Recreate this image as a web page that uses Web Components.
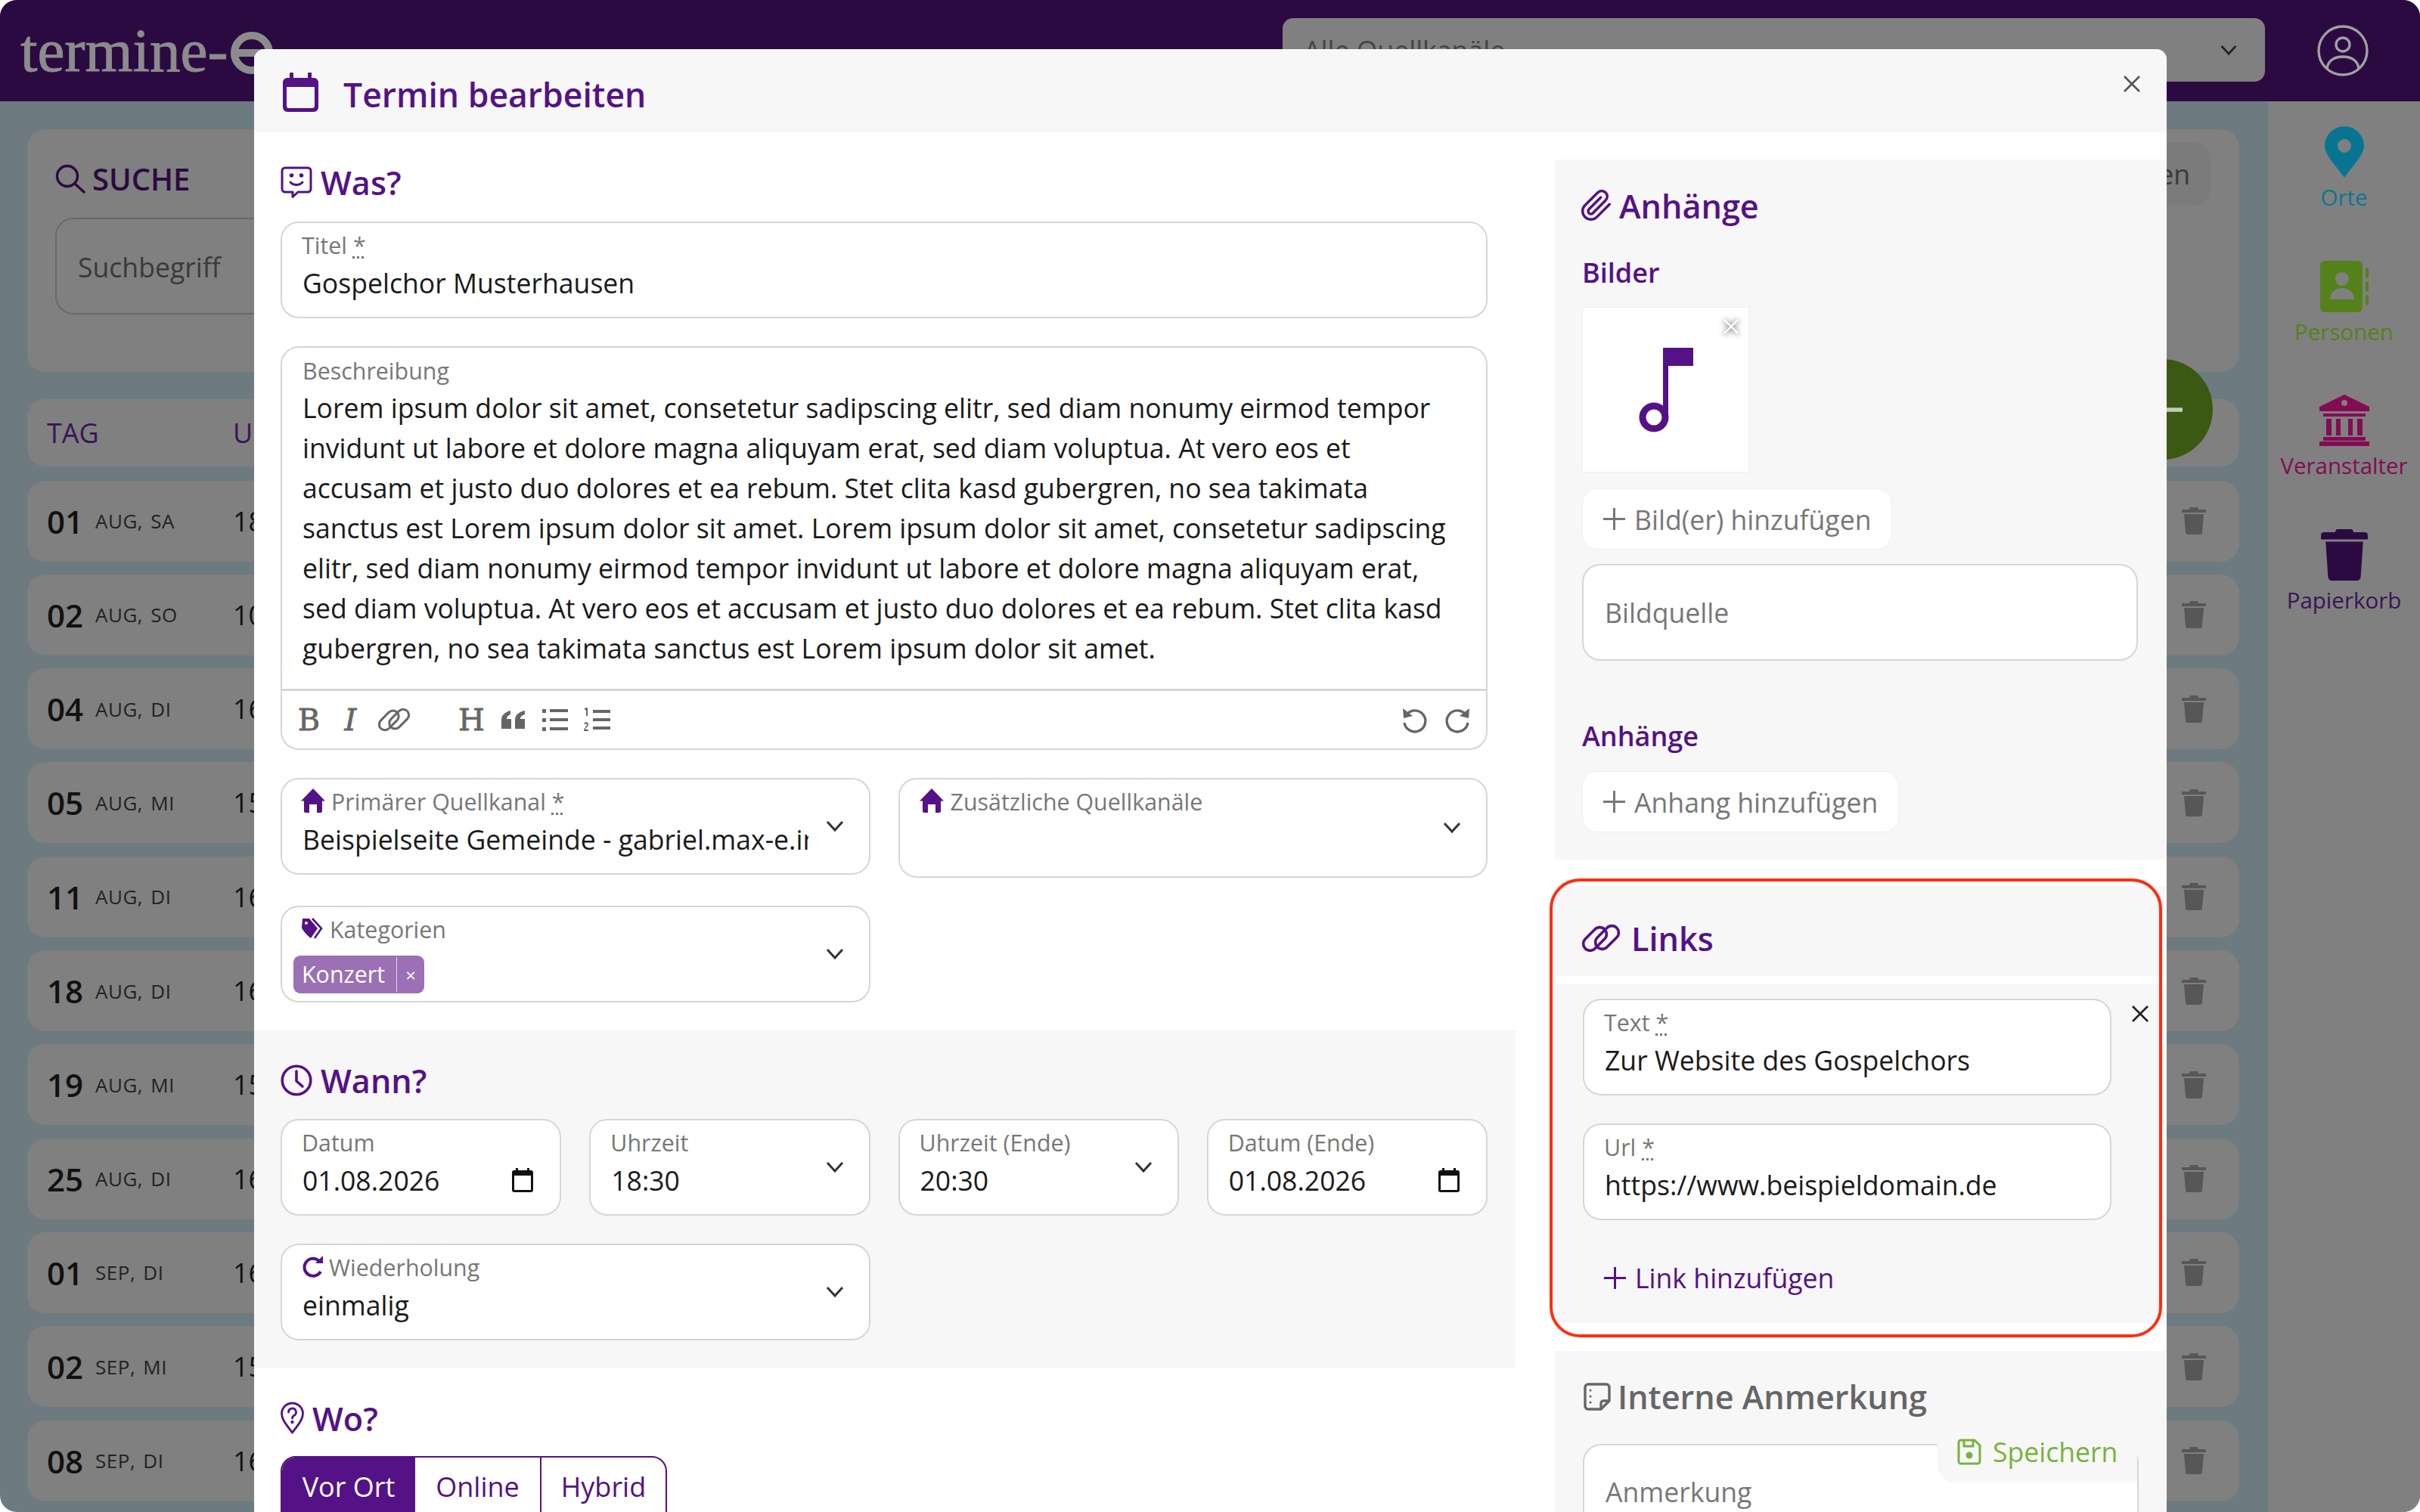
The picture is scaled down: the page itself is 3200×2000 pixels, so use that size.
<!doctype html>
<html lang="de">
<head>
<meta charset="utf-8">
<title>Termin bearbeiten</title>
<style>
  html, body { margin: 0; background: #fff; }
  body { font-family: "Open Sans", "Noto Sans", sans-serif; }
</style>
</head>
<body>
<te-app>
  <te-header slot="header"></te-header>

  <te-search slot="main"></te-search>
  <te-row slot="main" head day="TAG" time="UHR"></te-row>
  <te-row slot="main" day="01" month="AUG, SA" time="18:30"></te-row>
  <te-row slot="main" day="02" month="AUG, SO" time="10:00"></te-row>
  <te-row slot="main" day="04" month="AUG, DI" time="16:00"></te-row>
  <te-row slot="main" day="05" month="AUG, MI" time="15:00"></te-row>
  <te-row slot="main" day="11" month="AUG, DI" time="16:00"></te-row>
  <te-row slot="main" day="18" month="AUG, DI" time="16:00"></te-row>
  <te-row slot="main" day="19" month="AUG, MI" time="15:00"></te-row>
  <te-row slot="main" day="25" month="AUG, DI" time="16:00"></te-row>
  <te-row slot="main" day="01" month="SEP, DI" time="16:00"></te-row>
  <te-row slot="main" day="02" month="SEP, MI" time="15:00"></te-row>
  <te-row slot="main" day="08" month="SEP, DI" time="16:00"></te-row>

  <te-side-item slot="side" icon="pin" color="#087590" text="#0c7690" label="Orte"></te-side-item>
  <te-side-item slot="side" icon="contacts" color="#55811b" text="#55811b" label="Personen"></te-side-item>
  <te-side-item slot="side" icon="bank" color="#830c53" text="#830c53" label="Veranstalter"></te-side-item>
  <te-side-item slot="side" icon="bin" color="#2b0a42" text="#3a1458" label="Papierkorb"></te-side-item>

  <te-fab slot="fab"></te-fab>

  <te-modal slot="modal" heading="Termin bearbeiten">
    <te-section slot="left" heading="Was?" icon="bubble">
      <te-form-grid>
        <te-field span="4" required>
          <span slot="label">Titel</span>Gospelchor Musterhausen
        </te-field>
        <te-editor span="4"></te-editor>
        <te-field span="2" chevron required>
          <te-icon slot="icon" name="home" style="width:32px;height:32px"></te-icon>
          <span slot="label">Primärer Quellkanal</span>Beispielseite Gemeinde - gabriel.max-e.info
        </te-field>
        <te-field span="2" chevron tall>
          <te-icon slot="icon" name="home" style="width:34px;height:32px"></te-icon>
          <span slot="label">Zusätzliche Quellkanäle</span>
        </te-field>
        <te-field span="2" chevron chips>
          <te-icon slot="icon" name="tags" style="width:30px;height:30px"></te-icon>
          <span slot="label">Kategorien</span><te-chip>Konzert</te-chip>
        </te-field>
      </te-form-grid>
    </te-section>

    <te-section slot="left" heading="Wann?" icon="clock" shaded>
      <te-form-grid>
        <te-field>
          <span slot="label">Datum</span>01.08.2026
          <te-icon slot="trail" name="date" style="width:28px;height:32px;color:#111"></te-icon>
        </te-field>
        <te-field chevron><span slot="label">Uhrzeit</span>18:30</te-field>
        <te-field chevron><span slot="label">Uhrzeit (Ende)</span>20:30</te-field>
        <te-field>
          <span slot="label">Datum (Ende)</span>01.08.2026
          <te-icon slot="trail" name="date" style="width:28px;height:32px;color:#111"></te-icon>
        </te-field>
        <te-field span="2" chevron>
          <te-icon slot="icon" name="repeat" style="width:29px;height:30px"></te-icon>
          <span slot="label">Wiederholung</span>einmalig
        </te-field>
      </te-form-grid>
    </te-section>

    <te-section slot="left" heading="Wo?" icon="pinq">
      <te-segments></te-segments>
    </te-section>

    <te-attachments slot="right"></te-attachments>
    <te-links slot="right"></te-links>
    <te-note slot="right"></te-note>

    <te-save slot="float"></te-save>
  </te-modal>
</te-app>

<script>
const PURPLE = "#541286";

const ICONS = {
  calendar: `<svg viewBox="0 0 47 52"><path fill="currentColor" d="M9 0h5v7h19V0h5v7h3a6 6 0 0 1 6 6v33a6 6 0 0 1-6 6H6a6 6 0 0 1-6-6V13a6 6 0 0 1 6-6h3zM5 19v25a3 3 0 0 0 3 3h31a3 3 0 0 0 3-3V19z"/></svg>`,
  date: `<svg viewBox="0 0 28 32"><path fill="currentColor" d="M5 0h3v3h12V0h3v3h2a3 3 0 0 1 3 3v23a3 3 0 0 1-3 3H3a3 3 0 0 1-3-3V6a3 3 0 0 1 3-3h2zM3 10v19h22V10z"/></svg>`,
  bubble: `<svg viewBox="0 0 42 42" fill="none" stroke="currentColor" stroke-width="3" stroke-linejoin="round" stroke-linecap="round"><path d="M6 2h30a4 4 0 0 1 4 4v24a4 4 0 0 1-4 4H23l-7 6.500V34H6a4 4 0 0 1-4-4V6a4 4 0 0 1 4-4z"/><path d="M13 21c4 4.500 12 4.500 16 0"/><circle cx="14.500" cy="12" r="1.300" fill="currentColor"/><circle cx="27.500" cy="12" r="1.300" fill="currentColor"/></svg>`,
  clock: `<svg viewBox="0 0 42 42" fill="none" stroke="currentColor" stroke-width="3.600" stroke-linecap="round" stroke-linejoin="round"><circle cx="21" cy="21" r="18.800"/><path d="M21 9v13l8 7"/></svg>`,
  pinq: `<svg viewBox="0 0 31 42" fill="none" stroke="currentColor" stroke-width="2.800" stroke-linecap="round" stroke-linejoin="round"><path d="M15.500 40C9 31 1.500 23.500 1.500 15a14 14 0 0 1 28 0c0 8.500-7.500 16-14 25z"/><path d="M10.500 13a5 5 0 1 1 7.500 4.300c-1.700 1-2.500 2-2.500 3.700"/><circle cx="15.500" cy="26" r=".8" fill="currentColor"/></svg>`,
  clip: `<svg viewBox="0 0 24 24" fill="none" stroke="currentColor" stroke-width="1.900" stroke-linecap="round" stroke-linejoin="round"><path d="M21.440 11.050l-9.190 9.190a6 6 0 0 1-8.490-8.490l9.190-9.190a4 4 0 0 1 5.660 5.660l-9.200 9.190a2 2 0 0 1-2.830-2.830l8.490-8.480"/></svg>`,
  link: `<svg viewBox="0 0 50 38" fill="none" stroke="currentColor" stroke-width="3.600"><rect x="-1" y="11" width="36" height="18" rx="9" transform="rotate(-45 17 20)"/><rect x="15" y="9" width="36" height="18" rx="9" transform="rotate(-45 33 18)"/></svg>`,
  note: `<svg viewBox="0 0 37 37" fill="none" stroke="currentColor" stroke-width="3.400" stroke-linejoin="round"><path d="M7 2h24a4 4 0 0 1 4 4v18L24 35H7a4 4 0 0 1-4-4V6a4 4 0 0 1 4-4z"/><path d="M35 24H27a3 3 0 0 0-3 3v8"/><path d="M10 10h.1M10 18h.1M10 26h.1" stroke-linecap="round" stroke-width="3"/></svg>`,
  save: `<svg viewBox="0 0 32 35" fill="none" stroke="currentColor" stroke-width="3" stroke-linejoin="round"><path d="M5 2h18l7 7v21a3 3 0 0 1-3 3H5a3 3 0 0 1-3-3V5a3 3 0 0 1 3-3z"/><path d="M9 2v8h12V2"/><circle cx="16" cy="22" r="3" fill="currentColor"/></svg>`,
  home: `<svg viewBox="0 0 32 32"><path fill="currentColor" d="M16 0l16 16.500h-4V30a2 2 0 0 1-2 2h-5V21h-10v11H6a2 2 0 0 1-2-2V16.500H0z"/></svg>`,
  tags: `<svg viewBox="0 0 30 30"><path fill="currentColor" d="M2 2h9l11 13-9 13C10 26 2 18 1 14z"/><path fill="none" stroke="currentColor" stroke-width="2.600" d="M15 2l12 13-9 13"/><circle cx="7" cy="8" r="2" fill="#fff"/></svg>`,
  repeat: `<svg viewBox="0 0 29 30" fill="none" stroke="currentColor" stroke-width="4"><path d="M24 8a11.500 11.500 0 1 0 2 14"/><path fill="currentColor" stroke="none" d="M19 11h10V1z"/></svg>`,
  search: `<svg viewBox="0 0 40 38" fill="none" stroke="currentColor" stroke-width="3.400" stroke-linecap="round"><circle cx="16" cy="15" r="13.500"/><path d="M26 25l12 11"/></svg>`,
  chevron: `<svg viewBox="0 0 24 16" fill="none" stroke="currentColor" stroke-width="3"><path d="M2 2l10 11L22 2"/></svg>`,
  user: `<svg viewBox="0 0 68 68" fill="none" stroke="currentColor" stroke-width="3.400"><circle cx="34" cy="34" r="32"/><circle cx="34" cy="26" r="9"/><path d="M13 58c1-11 10-16 21-16s20 5 21 16"/></svg>`,
  trash: `<svg viewBox="0 0 32 36"><path fill="currentColor" d="M11 0h10l1 3h9a1 1 0 0 1 1 1v3H0V4a1 1 0 0 1 1-1h9zM3 9h26l-2 24a3 3 0 0 1-3 3H8a3 3 0 0 1-3-3z"/></svg>`,
  pin: `<svg viewBox="0 0 52 68"><path fill="currentColor" fill-rule="evenodd" d="M26 68C15 52 0 38 0 26a26 26 0 0 1 52 0c0 12-15 26-26 42zm0-33a9 9 0 1 0 0-18 9 9 0 0 0 0 18z"/></svg>`,
  contacts: `<svg viewBox="0 0 64 68"><path fill="currentColor" fill-rule="evenodd" d="M6 0h44a6 6 0 0 1 6 6v56a6 6 0 0 1-6 6H6a6 6 0 0 1-6-6V6a6 6 0 0 1 6-6zm23 15a9 9 0 1 0 0 18 9 9 0 0 0 0-18zM13 51h32c0-9-7-15-16-15s-16 6-16 15z"/><rect x="60" y="9" width="4" height="14" rx="2" fill="currentColor"/><rect x="60" y="27" width="4" height="14" rx="2" fill="currentColor"/><rect x="60" y="45" width="4" height="14" rx="2" fill="currentColor"/></svg>`,
  bank: `<svg viewBox="0 0 68 68"><path fill="currentColor" fill-rule="evenodd" d="M34 0l33 16v6H1v-6zm0 7a4 4 0 1 0 0 8 4 4 0 0 0 0-8z"/><path fill="currentColor" d="M6 25h56v4H6zM10 32h7v22h-7zM23 32h6v22h-6zM39 32h6v22h-6zM51 32h7v22h-7zM6 56h56v5H6zM1 62h66v6H1z"/></svg>`,
  bin: `<svg viewBox="0 0 60 66"><path fill="currentColor" d="M20 0h20l2 4h14a4 4 0 0 1 4 4v5H0V8a4 4 0 0 1 4-4h14zM6 16h48l-3 45a5 5 0 0 1-5 5H14a5 5 0 0 1-5-5z"/></svg>`,
  note4: `<svg viewBox="0 0 70 112"><path fill="currentColor" d="M30 0h40v24H37v68h-7z"/><circle cx="18" cy="92" r="15" fill="none" stroke="currentColor" stroke-width="9"/></svg>`,
  plus: `<svg viewBox="0 0 29 29" fill="none" stroke="currentColor" stroke-width="3"><path d="M14.500 0v29M0 14.500h29"/></svg>`,
  close: `<svg viewBox="0 0 24 24" fill="none" stroke="currentColor" stroke-width="2.600"><path d="M2 2l20 20M22 2L2 22"/></svg>`,
  quote: `<svg viewBox="0 0 32 24"><path fill="currentColor" d="M0 24V13C0 6 4 2 12 0v5c-3 1-5 3-5 6h6v13zM18 24V13c0-7 4-11 13-13v5c-4 1-6 3-6 6h6v13z"/></svg>`,
  ul: `<svg viewBox="0 0 34 30"><path fill="currentColor" d="M0 1h5v5H0zM10 1h24v4H10zM0 13h5v5H0zM10 13h24v4H10zM0 25h5v5H0zM10 25h24v4H10z"/></svg>`,
  ol: `<svg viewBox="0 0 36 32"><path fill="currentColor" d="M13 3h23v4H13zM13 14h23v4H13zM13 25h23v4H13zM2 1l3-1h1v11H4V3L2 3zM1 21c1-2 6-3 6 1 0 3-4 5-4 7h4v2H1c0-4 4-6 4-9 0-1-2-1-3 0z"/></svg>`,
  undo: `<svg viewBox="0 0 34 32" fill="none" stroke="currentColor" stroke-width="3.400"><path d="M7 9a14 14 0 1 1-3 11"/><path fill="currentColor" stroke="none" d="M2 1l1 13 12-3z"/></svg>`,
  redo: `<svg viewBox="0 0 34 32" fill="none" stroke="currentColor" stroke-width="3.400"><path d="M27 9a14 14 0 1 0 3 11"/><path fill="currentColor" stroke="none" d="M32 1l-1 13-12-3z"/></svg>`,
};

class ShadowElement extends HTMLElement {
  constructor() {
    super();
    this.attachShadow({ mode: "open" });
  }

  connectedCallback() {
    this.shadowRoot.innerHTML = `<style>${this.styles()}</style>${this.markup()}`;
  }

  attr(name, fallback = "") {
    return this.hasAttribute(name) ? this.getAttribute(name) : fallback;
  }
}

class TeIcon extends ShadowElement {
  styles() {
    return `:host { display: inline-block; flex: none; line-height: 0; }
      svg { width: 100%; height: 100%; display: block; overflow: visible; }`;
  }
  markup() {
    return ICONS[this.attr("name")] || "";
  }
}

class TeApp extends ShadowElement {
  styles() {
    return `:host { display: block; position: relative; width: 3200px; height: 2000px; overflow: hidden;
        border-radius: 22px; background: #6d7a80; }
      .body { display: flex; height: 1866px; }
      main { flex: 1; min-width: 0; padding: 37px 38px 0 36px; display: flex; flex-direction: column; gap: 17.300px; }
      aside { width: 201px; background: #808080; padding-top: 33px; box-sizing: border-box; }
      ::slotted(te-fab) { position: absolute; left: 2793px; top: 475px; }
      ::slotted(te-modal) { position: absolute; left: 336px; top: 65px; }`;
  }
  markup() {
    return `<slot name="header"></slot>
      <div class="body">
        <main><slot name="main"></slot></main>
        <aside><slot name="side"></slot></aside>
      </div>
      <slot name="fab"></slot>
      <slot name="modal"></slot>`;
  }
}

class TeHeader extends ShadowElement {
  styles() {
    return `:host { display: flex; align-items: center; height: 134px; background: #2b0a42; padding: 0 68px 0 27px; box-sizing: border-box; }
      .logo { display: flex; align-items: center; gap: 4px; font: 81px "Liberation Serif", serif; color: #8c8c8c; -webkit-text-stroke: 1px #8c8c8c; }
      .logo svg { width: 56px; height: 56px; margin-top: 6px; }
      .select { margin-left: auto; width: 1299px; height: 84px; margin-top: -2px; border-radius: 14px; background: #808080; box-sizing: border-box;
        padding: 0 36px 0 28px; display: flex; align-items: center; justify-content: space-between; font-size: 35.600px; color: #444; }
      .select te-icon { width: 24px; height: 15px; color: #222; }
      .user { width: 68px; height: 68px; margin-left: 69px; color: #a0a0a0; }`;
  }
  markup() {
    return `<div class="logo">termine-<svg viewBox="0 0 56 56" fill="none" stroke="#8c8c8c" stroke-width="10"><circle cx="28" cy="28" r="23"/><path d="M10 28h36"/></svg></div>
      <div class="select">Alle Quellkanäle<te-icon name="chevron"></te-icon></div>
      <te-icon class="user" name="user"></te-icon>`;
  }
}

class TeSearch extends ShadowElement {
  styles() {
    return `:host { display: flex; justify-content: space-between; align-items: flex-start; height: 321px; box-sizing: border-box; flex: none;
        background: #808080; border-radius: 24px; padding: 18px 38px 0 37px; }
      h2 { margin: 20px 0 23px; display: flex; align-items: center; gap: 9px; font-size: 40px; line-height: 56px; font-weight: 600; color: #2b0a42; }
      h2 te-icon { width: 40px; height: 38px; color: #2b0a42; }
      .input { width: 600px; height: 128px; box-sizing: border-box; border: 2px solid #6a6a6a; border-radius: 24px; padding: 2px 0 0 28px;
        display: flex; align-items: center; font-size: 35.600px; color: #3a3a3a; }
      .reset { height: 82px; padding: 0 27px; border-radius: 20px; background: #7b7b7b; display: flex; align-items: center; font-size: 35.600px; color: #383838; }`;
  }
  markup() {
    return `<div><h2><te-icon name="search"></te-icon>SUCHE</h2><div class="input">Suchbegriff</div></div>
      <div class="reset">zurücksetzen</div>`;
  }
}

class TeRow extends ShadowElement {
  styles() {
    return `:host { display: flex; align-items: center; height: 107px; box-sizing: border-box; flex: none;
        background: #808080; border-radius: 24px; padding: 0 44px 0 26px; color: #111; }
      :host([head]) { height: 89px; color: #3a1458; margin: 19px 0 1px; }
      .day { width: 246px; display: flex; align-items: center; gap: 16px; }
      .num { font-size: 42px; font-weight: 600; }
      .month { font-size: 26px; letter-spacing: .5px; color: #222; word-spacing: 3px; }
      .time, .label { font-size: 36px; }
      te-icon { margin-left: auto; width: 32px; height: 36px; color: #575757; }`;
  }
  markup() {
    if (this.hasAttribute("head")) {
      return `<div class="day label">${this.attr("day")}</div><div class="label">${this.attr("time")}</div>`;
    }
    return `<div class="day"><span class="num">${this.attr("day")}</span><span class="month">${this.attr("month")}</span></div>
      <div class="time">${this.attr("time")}</div>
      <te-icon name="trash"></te-icon>`;
  }
}

class TeSideItem extends ShadowElement {
  styles() {
    return `:host { display: flex; flex-direction: column; align-items: center; height: 177.700px; }
      te-icon { height: 68px; width: 68px; }
      span { margin-top: 6px; font-size: 29.500px; line-height: 40px; }`;
  }
  markup() {
    return `<te-icon name="${this.attr("icon")}" style="color:${this.attr("color")}"></te-icon>
      <span style="color:${this.attr("text")}">${this.attr("label")}</span>`;
  }
}

class TeFab extends ShadowElement {
  styles() {
    return `:host { display: flex; align-items: center; justify-content: center; width: 133px; height: 133px; border-radius: 50%; background: #3b5912; color: #c4cbb8; }
      te-icon { width: 52px; height: 52px; }`;
  }
  markup() {
    return `<te-icon name="plus"></te-icon>`;
  }
}

class TeModal extends ShadowElement {
  styles() {
    return `:host { display: flex; flex-direction: column; position: absolute; width: 2529px; height: 1935px; overflow: hidden;
        background: #fff; border-radius: 14px 14px 0 0; }
      header { height: 110px; flex: none; background: #f7f7f7; display: flex; align-items: center; padding: 8px 34px 0 38px; box-sizing: border-box;
        font-size: 44.500px; font-weight: 600; color: ${PURPLE}; }
      header .cal { width: 47px; height: 52px; margin: -4px 33px 0 0; }
      header .x { margin: -26px 0 0 auto; width: 24px; height: 24px; color: #555; }
      .cols { display: grid; grid-template-columns: 1668px 809px; column-gap: 52px; }
      ::slotted(te-save) { position: absolute; right: 39px; bottom: 39px; }`;
  }
  markup() {
    return `<header><te-icon class="cal" name="calendar"></te-icon>${this.attr("heading")}<te-icon class="x" name="close"></te-icon></header>
      <div class="cols">
        <div><slot name="left"></slot></div>
        <div style="padding-top:36px"><slot name="right"></slot></div>
      </div>
      <slot name="float"></slot>`;
  }
}

class TeHeading extends ShadowElement {
  styles() {
    return `:host { display: flex; align-items: center; height: 60px; gap: 11px; font-size: 43.200px; font-weight: 600; color: var(--heading-color, ${PURPLE}); }
      te-icon { height: 42px; width: 42px; }
      te-icon[name=pinq] { width: 31px; }
      te-icon[name=clip] { width: 44px; height: 44px; margin-left: -3px; margin-right: -3px; }
      te-icon[name=link] { width: 50px; height: 38px; margin-right: 4px; }
      te-icon[name=note] { width: 37px; height: 37px; margin-right: -2px; }`;
  }
  markup() {
    return `<te-icon name="${this.attr("icon")}"></te-icon>${this.attr("text")}`;
  }
}

class TeSection extends ShadowElement {
  styles() {
    return `:host { display: block; padding: 36px 37px 37px 35px; }
      :host([shaded]) { background: #f7f7f7; padding-bottom: 36px; }
      :host([icon=pinq]) { padding-top: 37px; }
      te-heading { margin-bottom: 22px; }
      :host([shaded]) te-heading { margin-bottom: 21px; }`;
  }
  markup() {
    return `<te-heading icon="${this.attr("icon")}" text="${this.attr("heading")}"></te-heading><slot></slot>`;
  }
}

class TeFormGrid extends ShadowElement {
  styles() {
    return `:host { display: grid; grid-template-columns: repeat(4, 1fr); gap: 37px; align-items: start; }
      ::slotted([span="2"]) { grid-column: span 2; }
      ::slotted([span="4"]) { grid-column: span 4; }`;
  }
  markup() {
    return `<slot></slot>`;
  }
}

class TeField extends ShadowElement {
  styles() {
    return `:host { display: flex; align-items: center; height: 128px; box-sizing: border-box; min-width: 0;
        background: #fff; border: 2px solid #d6d6d6; border-radius: 24px; padding: 0 33px 0 27px; }
      :host([tall]) { height: 132px; }
      .col { flex: 1; min-width: 0; align-self: flex-start; padding-top: 9px; }
      .label { display: flex; align-items: center; gap: 9px; height: 40px; font-size: 30.400px; color: #777; white-space: nowrap; }
      .label ::slotted(te-icon) { color: ${PURPLE}; margin: -2px 0 0 -2px; }
      u { text-decoration: underline dotted; text-underline-offset: 3px; }
      .value { display: flex; align-items: center; justify-content: space-between; margin-top: 5px; height: 50px; font-size: 35.600px; color: #1a1a1a;
        white-space: nowrap; overflow: hidden; }
      :host([chips]) .value { overflow: visible; align-items: flex-start; margin-top: 6px; }
      .label span { margin-left: -1px; }
      .chev { width: 24px; height: 16px; margin-left: 23px; color: #333; }
      slot[name=trail]::slotted(te-icon) { margin-right: 2px; }`;
  }
  markup() {
    const req = this.hasAttribute("required") ? ` <u>*</u>` : "";
    const chev = this.hasAttribute("chevron") ? `<te-icon class="chev" name="chevron"></te-icon>` : "";
    return `<div class="col">
        <div class="label"><slot name="icon"></slot><span><slot name="label"></slot>${req}</span></div>
        <div class="value"><span><slot></slot></span><slot name="trail"></slot></div>
      </div>${chev}`;
  }
}

class TeChip extends ShadowElement {
  styles() {
    return `:host { display: inline-flex; align-items: center; height: 50px; margin: 9px 0 0 -12px; background: #9b70b5; border-radius: 9px;
        color: #fff; font-size: 30.400px; }
      .t { padding: 0 15px 0 11px; line-height: 46px; border-right: 1px solid #e3d6ec; height: 46px; }
      .x { width: 36px; text-align: center; font-size: 24px; }`;
  }
  markup() {
    return `<span class="t"><slot></slot></span><span class="x">×</span>`;
  }
}

const LOREM = [
  "Lorem ipsum dolor sit amet, consetetur sadipscing elitr, sed diam nonumy eirmod tempor",
  "invidunt ut labore et dolore magna aliquyam erat, sed diam voluptua. At vero eos et",
  "accusam et justo duo dolores et ea rebum. Stet clita kasd gubergren, no sea takimata",
  "sanctus est Lorem ipsum dolor sit amet. Lorem ipsum dolor sit amet, consetetur sadipscing",
  "elitr, sed diam nonumy eirmod tempor invidunt ut labore et dolore magna aliquyam erat,",
  "sed diam voluptua. At vero eos et accusam et justo duo dolores et ea rebum. Stet clita kasd",
  "gubergren, no sea takimata sanctus est Lorem ipsum dolor sit amet.",
];

class TeEditor extends ShadowElement {
  styles() {
    return `:host { display: block; height: 534px; box-sizing: border-box; border: 2px solid #d6d6d6; border-radius: 24px; background: #fff; }
      .top { height: 454px; box-sizing: border-box; border-bottom: 3px solid #d6d6d6; padding: 11px 27px 0; }
      .label { height: 40px; line-height: 40px; font-size: 30.400px; color: #777; margin-bottom: 2px; }
      .text { font-size: 35.600px; line-height: 53px; color: #1a1a1a; white-space: nowrap; }
      .bar { display: flex; align-items: center; height: 76px; padding: 0 8px; color: #666; }
      .bar > span { width: 55px; display: flex; justify-content: center; align-items: center; }
      .glyph { font: 400 40px "DejaVu Serif", serif; line-height: 1; -webkit-text-stroke: .8px #666; }
      .glyph.i { font-style: italic; }
      .gap { width: 50px !important; }
      .end { margin-left: auto; }
      te-icon[name=link] { width: 42px; height: 32px; margin-left: 4px; }
      te-icon[name=quote] { width: 32px; height: 24px; }
      te-icon[name=ul] { width: 34px; height: 30px; }
      te-icon[name=ol] { width: 36px; height: 32px; }
      te-icon[name=undo], te-icon[name=redo] { width: 34px; height: 32px; }
      .w { width: 58px !important; }`;
  }
  markup() {
    return `<div class="top"><div class="label">Beschreibung</div><div class="text">${LOREM.join("<br>")}</div></div>
      <div class="bar">
        <span class="glyph">B</span><span class="glyph i">I</span><span><te-icon name="link"></te-icon></span><span class="gap"></span>
        <span class="glyph">H</span><span><te-icon name="quote"></te-icon></span><span><te-icon name="ul"></te-icon></span><span><te-icon name="ol"></te-icon></span>
        <span class="w end"><te-icon name="undo"></te-icon></span><span class="w"><te-icon name="redo"></te-icon></span>
      </div>`;
  }
}

class TeSegments extends ShadowElement {
  styles() {
    return `:host { display: inline-flex; height: 110px; box-sizing: border-box; border: 2px solid ${PURPLE}; border-radius: 20px; overflow: hidden;
        font-size: 36px; color: ${PURPLE}; margin-top: -2px; }
      span { display: flex; align-items: center; justify-content: center; height: 76px; box-sizing: border-box; border-left: 2px solid ${PURPLE}; }
      .on { border-left: 0; background: ${PURPLE}; color: #fff; width: 176px; }
      .mid { width: 165px; border-left: 0; }
      .end { width: 166px; }`;
  }
  markup() {
    return `<span class="on">Vor Ort</span><span class="mid">Online</span><span class="end">Hybrid</span>`;
  }
}

class TeAddButton extends ShadowElement {
  styles() {
    return `:host { display: inline-flex; align-items: center; gap: 12px; height: 81px; box-sizing: border-box; padding: 0 27px;
        background: #fff; border: 1px solid #efefef; border-radius: 20px; font-size: 35.600px; color: #777; }
      :host([plain]) { background: none; border: 0; height: 60px; color: ${PURPLE}; }
      te-icon { width: 29px; height: 29px; }`;
  }
  markup() {
    return `<te-icon name="plus"></te-icon><slot></slot>`;
  }
}

class TeAttachments extends ShadowElement {
  styles() {
    return `:host { display: block; background: #f7f7f7; padding: 31px 38px 36px 36px; height: 926px; box-sizing: border-box; }
      h3 { margin: 34px 0 20px; height: 50px; line-height: 50px; font-size: 36px; font-weight: 600; color: ${PURPLE}; }
      h3.second { margin-top: 75px; margin-bottom: 21px; }
      .img { position: relative; width: 221px; height: 219px; box-sizing: border-box; background: #fff; border: 1px solid #efefef; display: flex; align-items: center; justify-content: center; margin-bottom: 21px; }
      .img .note { width: 70px; height: 112px; color: ${PURPLE}; margin: 0 0 0 2px; }
      .img .rm { position: absolute; top: 14px; right: 12px; width: 22px; height: 22px; color: #fff; filter: drop-shadow(0 1px 3px rgba(0,0,0,.45)) drop-shadow(0 0 4px rgba(0,0,0,.3)); }
      te-add-button { display: inline-flex; }
      .input { height: 128px; margin-top: 19px; box-sizing: border-box; background: #fff; border: 2px solid #d6d6d6; border-radius: 24px; padding-left: 28px;
        display: flex; align-items: center; font-size: 35.600px; color: #777; }`;
  }
  markup() {
    return `<te-heading icon="clip" text="Anhänge"></te-heading>
      <h3>Bilder</h3>
      <div class="img"><te-icon class="note" name="note4"></te-icon><te-icon class="rm" name="close"></te-icon></div>
      <te-add-button>Bild(er) hinzufügen</te-add-button>
      <div class="input">Bildquelle</div>
      <h3 class="second">Anhänge</h3>
      <te-add-button>Anhang hinzufügen</te-add-button>`;
  }
}

class TeLinks extends ShadowElement {
  styles() {
    return `:host { display: block; position: relative; margin: 35px 0 37px; }
      :host::after { content: ""; position: absolute; left: -7px; right: 6px; top: -10px; bottom: -19px; border: 4px solid #ff2d0f; border-radius: 40px; pointer-events: none; }
      .head { height: 119px; box-sizing: border-box; background: #f7f7f7; padding: 39px 0 0 36px; margin-bottom: 11px; }
      .body { background: #f7f7f7; padding: 19px 0 29px 37px; height: 448px; box-sizing: border-box; }
      .row { display: flex; align-items: flex-start; }
      te-field { width: 699px; }
      .x { width: 24px; height: 24px; margin: 8px 0 0 26px; color: #222; }
      .url { margin-top: 37px; }
      te-add-button { margin-top: 46px; padding-left: 28px; }`;
  }
  markup() {
    return `<div class="head"><te-heading icon="link" text="Links"></te-heading></div>
      <div class="body">
        <div class="row"><te-field required><span slot="label">Text</span>Zur Website des Gospelchors</te-field><te-icon class="x" name="close"></te-icon></div>
        <div class="row url"><te-field required><span slot="label">Url</span>https://www.beispieldomain.de</te-field></div>
        <te-add-button plain>Link hinzufügen</te-add-button>
      </div>`;
  }
}

class TeNote extends ShadowElement {
  styles() {
    return `:host { display: block; background: #f7f7f7; padding: 30px 37px 0 37px; height: 300px; box-sizing: border-box; --heading-color: #666; }
      .input { margin-top: 33px; height: 130px; box-sizing: border-box; background: #fff; border: 2px solid #d6d6d6; border-radius: 24px; padding: 36px 0 0 28px; font-size: 35.600px; line-height: 50px; color: #777; }`;
  }
  markup() {
    return `<te-heading icon="note" text="Interne Anmerkung"></te-heading><div class="input">Anmerkung</div>`;
  }
}

class TeSave extends ShadowElement {
  styles() {
    return `:host { display: flex; align-items: center; gap: 15px; width: 264px; height: 82px; box-sizing: border-box; padding-left: 26px;
        background: #f7f7f7; border-radius: 0 0 0 24px; color: #77b33c; font-size: 35.600px; }
      te-icon { width: 32px; height: 35px; }`;
  }
  markup() {
    return `<te-icon name="save"></te-icon>Speichern`;
  }
}

const ELEMENTS = {
  "te-icon": TeIcon, "te-app": TeApp, "te-header": TeHeader, "te-search": TeSearch, "te-row": TeRow,
  "te-side-item": TeSideItem, "te-fab": TeFab, "te-modal": TeModal, "te-heading": TeHeading, "te-section": TeSection,
  "te-form-grid": TeFormGrid, "te-field": TeField, "te-chip": TeChip, "te-editor": TeEditor,
  "te-segments": TeSegments, "te-add-button": TeAddButton, "te-attachments": TeAttachments,
  "te-links": TeLinks, "te-note": TeNote, "te-save": TeSave,
};
Object.entries(ELEMENTS).forEach(([name, cls]) => customElements.define(name, cls));
</script>
</body>
</html>
